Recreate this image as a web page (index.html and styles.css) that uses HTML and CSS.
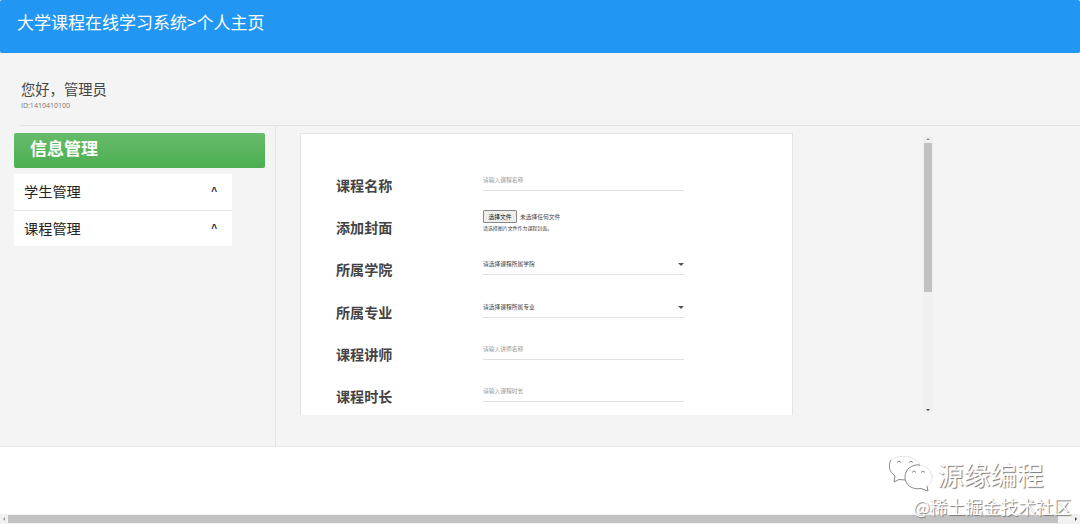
FILE: index.html
```html
<!DOCTYPE html>
<html lang="zh-CN">

<head>
    <meta charset="UTF-8">
    <meta name="viewport" content="width=device-width, initial-scale=1.0">
    <title>个人主页</title>
    <link rel="stylesheet" href="styles.css">
</head>

<body>
    <header class="navbar">大学课程在线学习系统&gt;个人主页</header>

    <main class="main">
        <div class="user">
            <div class="user-name">您好，管理员</div>
            <div class="user-id">ID:1410410100</div>
        </div>

        <div class="content">
            <aside class="sidebar">
                <h2 class="sidebar-title">信息管理</h2>
                <ul class="menu">
                    <li class="menu-item"><span>学生管理</span><span class="caret">^</span></li>
                    <li class="menu-item"><span>课程管理</span><span class="caret">^</span></li>
                </ul>
            </aside>

            <form class="panel">
                <div class="row">
                    <label class="label">课程名称</label>
                    <div class="field line placeholder">请输入课程名称</div>
                </div>
                <div class="row">
                    <label class="label">添加封面</label>
                    <div class="field">
                        <div class="file">
                            <button type="button" class="file-button">选择文件</button>
                            <span>未选择任何文件</span>
                        </div>
                        <p class="help">请选择图片文件作为课程封面。</p>
                    </div>
                </div>
                <div class="row">
                    <label class="label">所属学院</label>
                    <div class="field line select"><span>请选择课程所属学院</span><i class="arrow"></i></div>
                </div>
                <div class="row">
                    <label class="label">所属专业</label>
                    <div class="field line select"><span>请选择课程所属专业</span><i class="arrow"></i></div>
                </div>
                <div class="row">
                    <label class="label">课程讲师</label>
                    <div class="field line placeholder">请输入讲师名称</div>
                </div>
                <div class="row">
                    <label class="label">课程时长</label>
                    <div class="field line placeholder">请输入课程时长</div>
                </div>
            </form>

            <div class="scroll-y">
                <i class="scroll-up"></i>
                <div class="scroll-y-track">
                    <div class="scroll-y-thumb"></div>
                </div>
                <i class="scroll-down"></i>
            </div>
        </div>
    </main>

    <footer class="scroll-x">
        <i class="scroll-left"></i>
        <div class="scroll-x-thumb"></div>
        <i class="scroll-right"></i>
    </footer>

    <!-- watermark over the page corner -->
    <div class="brand">
        <svg class="brand-icon" width="48" height="40" viewBox="0 0 48 40">
            <path class="faint" d="M4 6C10 1 26 0 33 10M31 11C39 11 45 17 45 23" />
            <path d="M4 6C1 11 2 18 8 22L7 28L12 25.500L18 26" />
            <path d="M33 11C24 10 18 16 18 23C18 31 25 36 34 34.500L41 37L40 32" />
            <path class="faint" d="M40 32C44 30 46 25 45 21" />
            <path d="M10 8.500q2-3 4 0M22 8.500q2-3 4 0M25 18.500q2-3 4 0M34 18.500q2-3 4 0" />
        </svg>
        <span>源缘编程</span>
    </div>
    <div class="community">@稀土掘金技术社区</div>
</body>

</html>
```

FILE: styles.css
```css
* {
    box-sizing: border-box;
}

body {
    display: flex;
    flex-direction: column;
    height: 524px;
    margin: 0;
    overflow: hidden;
    background-color: #fff;
    color: #444;
    font-family: "Noto Sans CJK SC", sans-serif;
}

.navbar {
    height: 53px;
    padding: 7px 17px;
    border-radius: 2px;
    background-color: #2196f3;
    color: #fff;
    font-size: 17px;
    line-height: 29px;
    box-shadow: 0 1px 2px rgba(0, 0, 0, 0.15);
}

.main {
    height: 394px;
    border-bottom: 1px solid #e8e8e8;
    background-color: #f4f4f4;
}

.user {
    height: 73px;
    margin-left: 20px;
    padding: 26px 0 0 1px;
    border-bottom: 1px solid #e2e2e2;
}

.user-name {
    font-size: 14.3px;
    line-height: 20px;
}

.user-id {
    padding-top: 1px;
    color: #777;
    font-family: "Open Sans", sans-serif;
    font-size: 7px;
    line-height: 12px;
}

.content {
    display: flex;
    height: 320px;
}

.sidebar {
    width: 276px;
    padding: 7px 10px 0 14px;
    border-right: 1px solid #e6e6e6;
}

.sidebar-title {
    height: 35px;
    margin: 0 0 6px;
    padding-left: 16px;
    border-radius: 2px;
    background: linear-gradient(#66bb6a, #4caf50);
    color: #fff;
    font-size: 17px;
    line-height: 29px;
}

.menu {
    width: 218px;
    margin: 0;
    padding: 0;
    list-style: none;
    background-color: #fff;
    color: #222;
    font-size: 14.2px;
}

.menu-item {
    display: flex;
    justify-content: space-between;
    height: 36px;
    padding: 0 15px 0 10px;
    line-height: 35px;
}

.menu-item:first-child {
    height: 37px;
    border-bottom: 1px solid #e8e8e8;
}

.menu-item:last-child {
    height: 35px;
}

.caret {
    font-family: "Liberation Sans", sans-serif;
    font-size: 10px;
    font-weight: bold;
}

.panel {
    width: 493px;
    height: 282px;
    margin: 7px 0 0 24px;
    padding: 32px 35px 0;
    overflow: hidden;
    border: 1px solid #e4e4e4;
    border-bottom: none;
    background-color: #fff;
    font-size: 5.75px;
}

.row {
    display: flex;
    height: 42.2px;
}

.label {
    width: 147px;
    font-size: 14.1px;
    font-weight: bold;
    line-height: 38px;
}

.field {
    width: 201px;
    padding-top: 9px;
}

.line {
    height: 25px;
    border-bottom: 1px solid #e0e0e0;
    line-height: 10px;
}

.placeholder {
    color: #999;
}

.select {
    display: flex;
    justify-content: space-between;
}

.arrow {
    height: 3px;
    margin-top: 4px;
    border: 3px solid transparent;
    border-top-color: #555;
    border-bottom: none;
}

.file {
    display: flex;
    align-items: center;
    gap: 3px;
    margin-top: -7px;
    line-height: 12px;
}

.file-button {
    width: 34px;
    height: 13px;
    padding: 0;
    border: 1px solid #888;
    border-radius: 1px;
    background-color: #eee;
    color: #111;
    font-family: inherit;
    font-size: 5.8px;
    line-height: 10px;
}

.help {
    margin: 0;
    font-size: 4.95px;
    line-height: 10px;
}

/* scrollbars */
.scroll-y {
    display: flex;
    flex-direction: column;
    align-items: center;
    width: 10px;
    height: 277px;
    margin: 10px 0 0 130px;
    background-color: #f1f1f1;
}

.scroll-y-track {
    flex: 1;
}

.scroll-y-thumb {
    width: 8px;
    height: 149px;
    background-color: #c1c1c1;
}

.scroll-up,
.scroll-down {
    border: 2px solid transparent;
}

.scroll-up {
    margin: 2px 0 3px;
    border-top: none;
    border-bottom-color: #999;
}

.scroll-down {
    margin-bottom: 2px;
    border-bottom: none;
    border-top-color: #444;
}

.scroll-x {
    display: flex;
    align-items: center;
    height: 10px;
    margin-top: auto;
    padding: 0 3px;
    background-color: #f1f1f1;
}

.scroll-x-thumb {
    width: 1050px;
    height: 8px;
    margin-left: 3px;
    background-color: #c1c1c1;
}

.scroll-left,
.scroll-right {
    border: 2px solid transparent;
}

.scroll-left {
    border-left: none;
    border-right-color: #999;
}

.scroll-right {
    margin-left: auto;
    border-right: none;
    border-left-color: #444;
}

.brand,
.community {
    position: absolute;
    color: #fff;
    white-space: nowrap;
    text-shadow: 1px 1px 1px #777;
}

.brand {
    display: flex;
    align-items: center;
    top: 454px;
    left: 887px;
    gap: 2px;
    font-size: 26.7px;
    line-height: 40px;
}

.brand-icon {
    fill: none;
    stroke: #888;
}

.faint {
    stroke: #e4e4e4;
}

.community {
    top: 494px;
    left: 913px;
    font-size: 17.7px;
    line-height: 24px;
}
```
